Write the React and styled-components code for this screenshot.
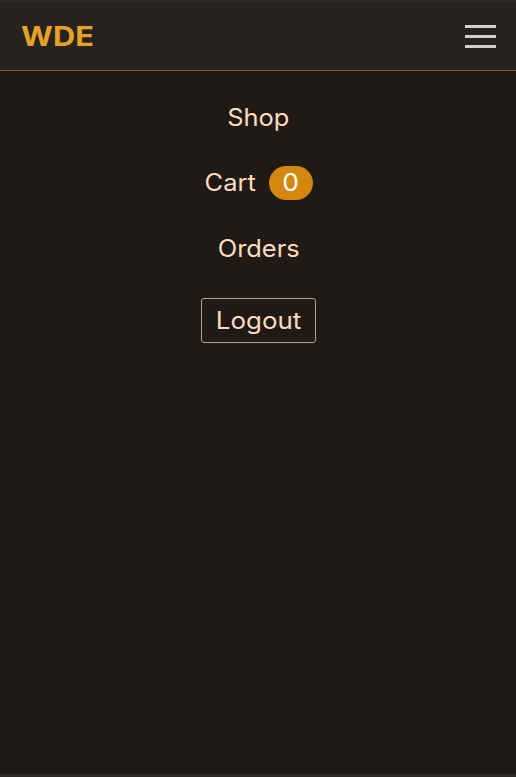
import React from "react";
import styled, { createGlobalStyle } from "styled-components";

const GlobalStyle = createGlobalStyle`
  * { box-sizing: border-box; }
  body { margin: 0; background: #1f1a16; font-family: Inter, sans-serif; }
`;

const Page = styled.div`
  display: flex;
  flex-direction: column;
  height: 777px;
  overflow: hidden;
  background: #1f1a16;
  border-top: 2px solid #2b2b2c;
  border-bottom: 3px solid #2a2a2b;
`;

const Header = styled.header`
  display: flex;
  flex: none;
  align-items: center;
  justify-content: space-between;
  height: 69px;
  padding: 1px 20px 0 21px;
  background: #26221f;
  border-bottom: 1px solid #935c14;
`;

const Brand = styled.a`
  font-size: 27px;
  font-weight: 700;
  line-height: 34px;
  transform: scaleX(1.14);
  transform-origin: left;
  color: #e5a228;
`;

const MenuButton = styled.button`
  display: flex;
  flex-direction: column;
  justify-content: space-between;
  width: 31px;
  height: 23px;
  padding: 0;
  border: 0;
  background: none;
`;

const MenuBar = styled.span`
  height: 3px;
  background: #d6cec5;
`;

const Nav = styled.nav`
  display: flex;
  flex-direction: column;
  align-items: center;
  padding-top: 30px;
`;

const NavItem = styled.a`
  display: flex;
  align-items: center;
  gap: 14px;
  height: 34px;
  margin-bottom: ${(p) => p.$gap || "31px"};
  padding-left: ${(p) => p.$indent || "1px"};
  font-size: 24px;
  font-weight: 400;
  line-height: 34px;
  color: #ffdcbd;
`;

const WideText = styled.span`
  display: inline-block;
  transform: scaleX(${(p) => p.$stretch || 1.06});
`;

const Badge = styled.span`
  width: 44px;
  height: 34px;
  border-radius: 17px;
  background: #d3870f;
  color: #fff;
  text-align: center;
`;

const LogoutButton = styled.button`
  width: 115px;
  height: 45px;
  padding: 0 0 0 2px;
  border: 1px solid #b69e89;
  border-radius: 3px;
  background: none;
  font: 400 24px/43px Inter, sans-serif;
  color: #ffdcbd;
`;

export default function App() {
  return (
    <>
      <GlobalStyle />
      <Page>
        <Header>
          <Brand>WDE</Brand>
          <MenuButton aria-label="Menu">
            <MenuBar />
            <MenuBar />
            <MenuBar />
          </MenuButton>
        </Header>
        <Nav>
          <NavItem>
            <WideText>Shop</WideText>
          </NavItem>
          <NavItem $gap="32px" $indent="3px">
            <WideText>Cart</WideText>
            <Badge>
              <WideText $stretch={1.1}>0</WideText>
            </Badge>
          </NavItem>
          <NavItem $gap="32px">
            <WideText>Orders</WideText>
          </NavItem>
          <LogoutButton>
            <WideText $stretch={1.08}>Logout</WideText>
          </LogoutButton>
        </Nav>
      </Page>
    </>
  );
}
